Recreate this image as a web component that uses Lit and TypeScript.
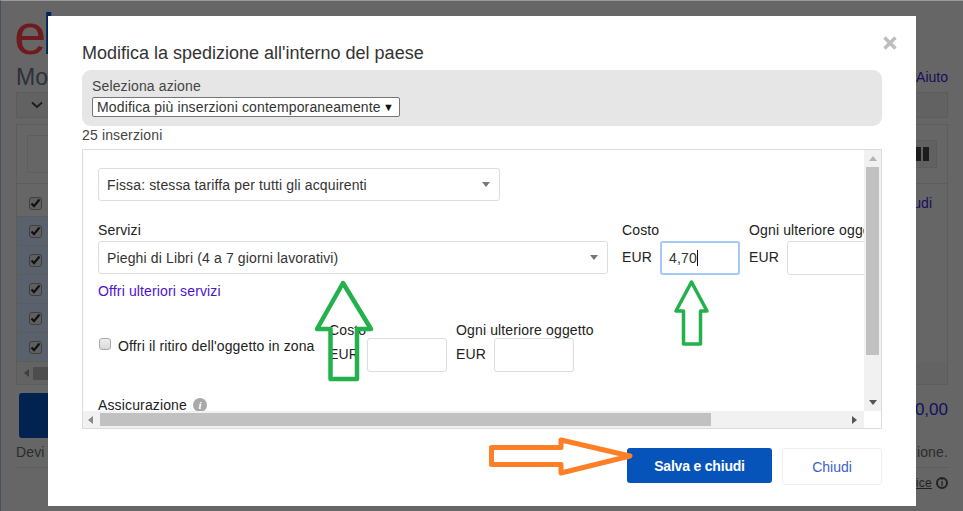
import { LitElement, html, css, svg } from "lit";
import { customElement } from "lit/decorators.js";

@customElement("app-root")
export class AppRoot extends LitElement {
  static styles = css`
    :host {
      display: block;
      position: relative;
      width: 963px;
      height: 511px;
      overflow: hidden;
      box-sizing: border-box;
      background: #666;
      border-top: 1px solid #9a9a9a;
      border-left: 1px solid #47525e;
      font: 14px/20px "Liberation Sans", Arial, sans-serif;
      color: #222;
    }
    /* dimmed page */
    .page { display: flex; flex-direction: column; width: 932px; margin-left: 15px; color: #262626; }
    .logo { height: 60px; margin-left: -2px; font-size: 58px; line-height: 66px; letter-spacing: -4px; white-space: nowrap; overflow: hidden; }
    .logo .e { color: #6f1a1f; }
    .logo .b { color: #00255c; }
    .head { display: flex; justify-content: space-between; align-items: center; height: 31px; }
    .head h1 { margin: 0; font-size: 23px; font-weight: 400; color: #2a313b; }
    .link { color: #14105c; }
    .toolbar { height: 24px; border: 1px solid #5c5c5c; background: #626262; display: flex; align-items: center; padding-left: 13px; }
    .table { margin-top: 6px; height: 259px; border: 1px solid #5c5c5c; display: flex; flex-direction: column; }
    .thead { height: 58px; border-bottom: 1px solid #5c5c5c; display: flex; justify-content: space-between; align-items: center; padding: 0 10px; }
    .thead .search { width: 300px; height: 36px; border: 1px solid #5e5e5e; }
    .colbtn { width: 36px; height: 28px; border: 1px solid #5c5c5c; background: #616161; display: flex; justify-content: flex-end; align-items: center; gap: 2px; padding-right: 7px; box-sizing: border-box; }
    .colbtn i { width: 6px; height: 14px; background: #1c1c1c; }
    .row { height: 29px; display: flex; align-items: stretch; justify-content: space-between; }
    .row.first { height: 33px; }
    .cell { width: 300px; box-sizing: border-box; padding-left: 12px; border-bottom: 1px solid #5c5c5c; background: #59616d; display: flex; align-items: center; }
    .row.first .cell { background: #666; padding-top: 6px; }
    .row .link { align-self: center; padding: 4px 15px 0 0; }
    .cb { width: 11px; height: 11px; border: 1px solid #3f3f3f; border-radius: 3px; background: #5f5f5f; display: flex; align-items: center; justify-content: center; }
    .hbar { flex: 1; display: flex; align-items: center; gap: 4px; padding-left: 7px; background: #636363; }
    .hbar .tri-l { border: 4px solid transparent; border-left: 0; border-right: 5px solid #3f3f3f; }
    .hbar .th { width: 300px; height: 13px; background: #4d4d4d; }
    .actions { display: flex; justify-content: space-between; align-items: center; height: 45px; margin-top: 8px; padding-left: 3px; }
    .primary { width: 200px; height: 45px; background: #02234f; border-radius: 3px; }
    .amount { font-size: 17px; color: #101060; align-self: flex-start; margin-top: 7px; }
    .note { display: flex; justify-content: space-between; margin-top: 4px; height: 25px; border-bottom: 1px solid #5c5c5c; color: #2b2b2b; letter-spacing: .15px; }
    .foot { display: flex; justify-content: flex-end; align-items: center; gap: 4px; height: 30px; font-size: 12px; color: #222; }
    .foot u { letter-spacing: .3px; }
    .foot .inf { width: 8px; height: 8px; border: 2px solid #222; border-radius: 50%; font: bold 9px/8px "Liberation Sans", sans-serif; text-align: center; }

    /* modal */
    .modal {
      position: absolute; left: 47px; top: 15px; width: 868px; height: 490px;
      box-sizing: border-box; background: #fff; padding: 25px 34px 0;
      display: flex; flex-direction: column; letter-spacing: .14px;
    }
    .close { position: absolute; left: 835px; top: 20px; width: 14px; height: 14px; }
    .title { font-size: 18px; line-height: 24px; color: #333; margin-bottom: 5px; letter-spacing: 0; }
    .panel { height: 56px; box-sizing: border-box; background: #e6e6e6; border-radius: 9px; padding: 6px 10px; color: #444; }
    .native { width: 308px; height: 20px; margin-top: 1px; box-sizing: border-box; background: #fff; border: 1px solid #767676; border-radius: 2px; padding: 0 4px; line-height: 18px; color: #333; display: flex; justify-content: space-between; align-items: center; white-space: nowrap; }
    .native b { font-size: 11px; color: #111; padding-right: 1px; }
    .count { line-height: 18px; color: #444; margin-bottom: 5px; }
    .scroll {
      height: 280px; box-sizing: border-box; border: 1px solid #dcdcdc;
      display: grid; grid-template-columns: 1fr 17px; grid-template-rows: 1fr 17px;
    }
    .view { overflow: hidden; padding: 18px 0 0 15px; min-width: 0; white-space: nowrap; }
    .sel { box-sizing: border-box; height: 33px; border: 1px solid #ddd; border-radius: 3px; padding: 0 9px 0 8px; display: flex; justify-content: space-between; align-items: center; color: #333; flex: none; }
    .sel .tri { border: 4.5px solid transparent; border-bottom: 0; border-top: 5px solid #777; }
    .sel.a { width: 402px; }
    .sel.b { width: 510px; }
    .services { display: flex; margin-top: 19px; }
    .col { flex: none; }
    .col.svc { width: 524px; }
    .col.cost { width: 127px; }
    .lbl { display: block; height: 20px; line-height: 20px; margin-bottom: 1px; color: #222; }
    .money { display: flex; align-items: center; gap: 10px; }
    .cur { width: 28px; color: #222; padding-bottom: 2px; }
    .inp { width: 80px; height: 34px; box-sizing: border-box; border: 1px solid #ddd; border-radius: 3px; padding: 0 8px; line-height: 32px; color: #333; flex: none; }
    .inp.focus { border: 2px solid #a6c8f7; padding: 0 7px; line-height: 30px; }
    .caret { display: inline-block; width: 1px; height: 16px; background: #111; vertical-align: -3px; }
    .more { display: block; margin-top: 6px; color: #4b12cf; text-decoration: none; }
    .pickup { display: flex; margin-top: 19px; height: 62px; }
    .pick { width: 231px; display: flex; align-items: flex-start; gap: 7px; padding: 16px 0 0 1px; box-sizing: border-box; color: #222; }
    .check { width: 12px; height: 12px; margin-top: 2px; flex: none; border: 1px solid #aaa; border-radius: 3px; background: linear-gradient(#eee, #d9d9d9); box-sizing: border-box; }
    .col.cost2 { width: 127px; }
    .pickup .lbl { margin-bottom: -2px; }
    .ins { display: flex; align-items: center; gap: 6px; margin-top: 13px; color: #222; }
    .ins i { width: 14px; height: 14px; border-radius: 50%; background: #a9a9a9; color: #fff; font: italic bold 11px/14px "Liberation Serif", serif; text-align: center; }
    .vbar { background: #f1f1f1; display: flex; flex-direction: column; align-items: center; justify-content: space-between; padding: 6px 0 6px; box-sizing: border-box; }
    .vbar .up { border: 4.5px solid transparent; border-top: 0; border-bottom: 5px solid #b4b4b4; }
    .vbar .thumb { width: 13px; height: 188px; background: #c1c1c1; margin-top: 6px; }
    .vbar .spacer { flex: 1; }
    .vbar .dn { border: 4.5px solid transparent; border-bottom: 0; border-top: 5px solid #555; }
    .hb { background: #f1f1f1; display: flex; align-items: center; padding: 0 7px 0 5px; }
    .hb .lt { border: 4.5px solid transparent; border-left: 0; border-right: 5px solid #888; }
    .hb .thumb { width: 611px; height: 13px; background: #c1c1c1; margin-left: 7px; }
    .hb .spacer { flex: 1; }
    .hb .rt { border: 4.5px solid transparent; border-right: 0; border-left: 5px solid #555; }
    .btns { display: flex; justify-content: flex-end; align-items: flex-start; gap: 10px; margin-top: 19px; }
    .save { width: 145px; height: 35px; background: #0654ba; color: #fff; font-weight: 700; letter-spacing: -.2px; border-radius: 3px; display: flex; align-items: center; justify-content: center; }
    .cancel { width: 100px; height: 37px; box-sizing: border-box; border: 1px solid #eee; border-radius: 3px; color: #3d62c4; letter-spacing: 0; display: flex; align-items: center; justify-content: center; }
    .notes { position: absolute; left: -1px; top: -1px; pointer-events: none; }
  `;

  private tick() {
    return html`<svg width="11" height="10" viewBox="0 0 11 10"><path d="M1.5 5.5 4 8.2 9.5 1.5" fill="none" stroke="#111" stroke-width="2.2"/></svg>`;
  }

  render() {
    return html`
      <div class="page">
        <div class="logo"><span class="e">e</span><span class="b">bay</span></div>
        <div class="head"><h1>Modifica inserzioni</h1><span class="link">Aiuto</span></div>
        <div class="toolbar">
          <svg width="14" height="8" viewBox="0 0 14 8"><path d="M2 1.5 7 6 12 1.5" fill="none" stroke="#1c1c1c" stroke-width="1.8"/></svg>
        </div>
        <div class="table">
          <div class="thead"><div class="search"></div><div class="colbtn"><i></i><i></i></div></div>
          <div class="row first"><div class="cell"><span class="cb">${this.tick()}</span></div><span class="link">Chiudi</span></div>
          ${[0, 1, 2, 3, 4].map(() => html`<div class="row"><div class="cell"><span class="cb">${this.tick()}</span></div></div>`)}
          <div class="hbar"><span class="tri-l"></span><span class="th"></span></div>
        </div>
        <div class="actions"><div class="primary"></div><div class="amount">0,00</div></div>
        <div class="note"><span>Devi completare i dati</span><span>spedizione.</span></div>
        <div class="foot"><u>Notice</u><span class="inf">i</span></div>
      </div>

      <div class="modal">
        <svg class="close" viewBox="0 0 14 14"><path d="M1.5 1.5 12.5 12.5M12.5 1.5 1.5 12.5" stroke="#bdbdbd" stroke-width="3.4"/></svg>
        <div class="title">Modifica la spedizione all'interno del paese</div>
        <div class="panel">
          Seleziona azione
          <div class="native"><span>Modifica più inserzioni contemporaneamente</span><b>▼</b></div>
        </div>
        <div class="count">25 inserzioni</div>
        <div class="scroll">
          <div class="view">
            <div class="sel a"><span>Fissa: stessa tariffa per tutti gli acquirenti</span><span class="tri"></span></div>
            <div class="services">
              <div class="col svc">
                <span class="lbl">Servizi</span>
                <div class="sel b"><span>Pieghi di Libri (4 a 7 giorni lavorativi)</span><span class="tri"></span></div>
              </div>
              <div class="col cost">
                <span class="lbl">Costo</span>
                <div class="money"><span class="cur">EUR</span><div class="inp focus">4,70<span class="caret"></span></div></div>
              </div>
              <div class="col">
                <span class="lbl">Ogni ulteriore oggetto</span>
                <div class="money"><span class="cur">EUR</span><div class="inp"></div></div>
              </div>
            </div>
            <a class="more">Offri ulteriori servizi</a>
            <div class="pickup">
              <label class="pick"><span class="check"></span>Offri il ritiro dell'oggetto in zona</label>
              <div class="col cost2">
                <span class="lbl">Costo</span>
                <div class="money"><span class="cur">EUR</span><div class="inp"></div></div>
              </div>
              <div class="col">
                <span class="lbl">Ogni ulteriore oggetto</span>
                <div class="money"><span class="cur">EUR</span><div class="inp"></div></div>
              </div>
            </div>
            <div class="ins">Assicurazione <i>i</i></div>
          </div>
          <div class="vbar"><span class="up"></span><span class="thumb"></span><span class="spacer"></span><span class="dn"></span></div>
          <div class="hb"><span class="lt"></span><span class="thumb"></span><span class="spacer"></span><span class="rt"></span></div>
          <div></div>
        </div>
        <div class="btns"><div class="save">Salva e chiudi</div><div class="cancel">Chiudi</div></div>
      </div>

      <svg class="notes" width="963" height="511" viewBox="0 0 963 511" fill="none" stroke-linejoin="round">
        ${svg`<path d="M343 283 317 329H330.5V379H357V329H371Z" stroke="#22b14c" stroke-width="4.5"/>
        <path d="M691.5 282 676 311H683.5V344H700.5V311H707Z" stroke="#22b14c" stroke-width="3.5"/>
        <path d="M491.5 447.5H561V440L630 456 561 473V464.5H491.5Z" stroke="#ff7f27" stroke-width="5"/>`}
      </svg>
    `;
  }
}
